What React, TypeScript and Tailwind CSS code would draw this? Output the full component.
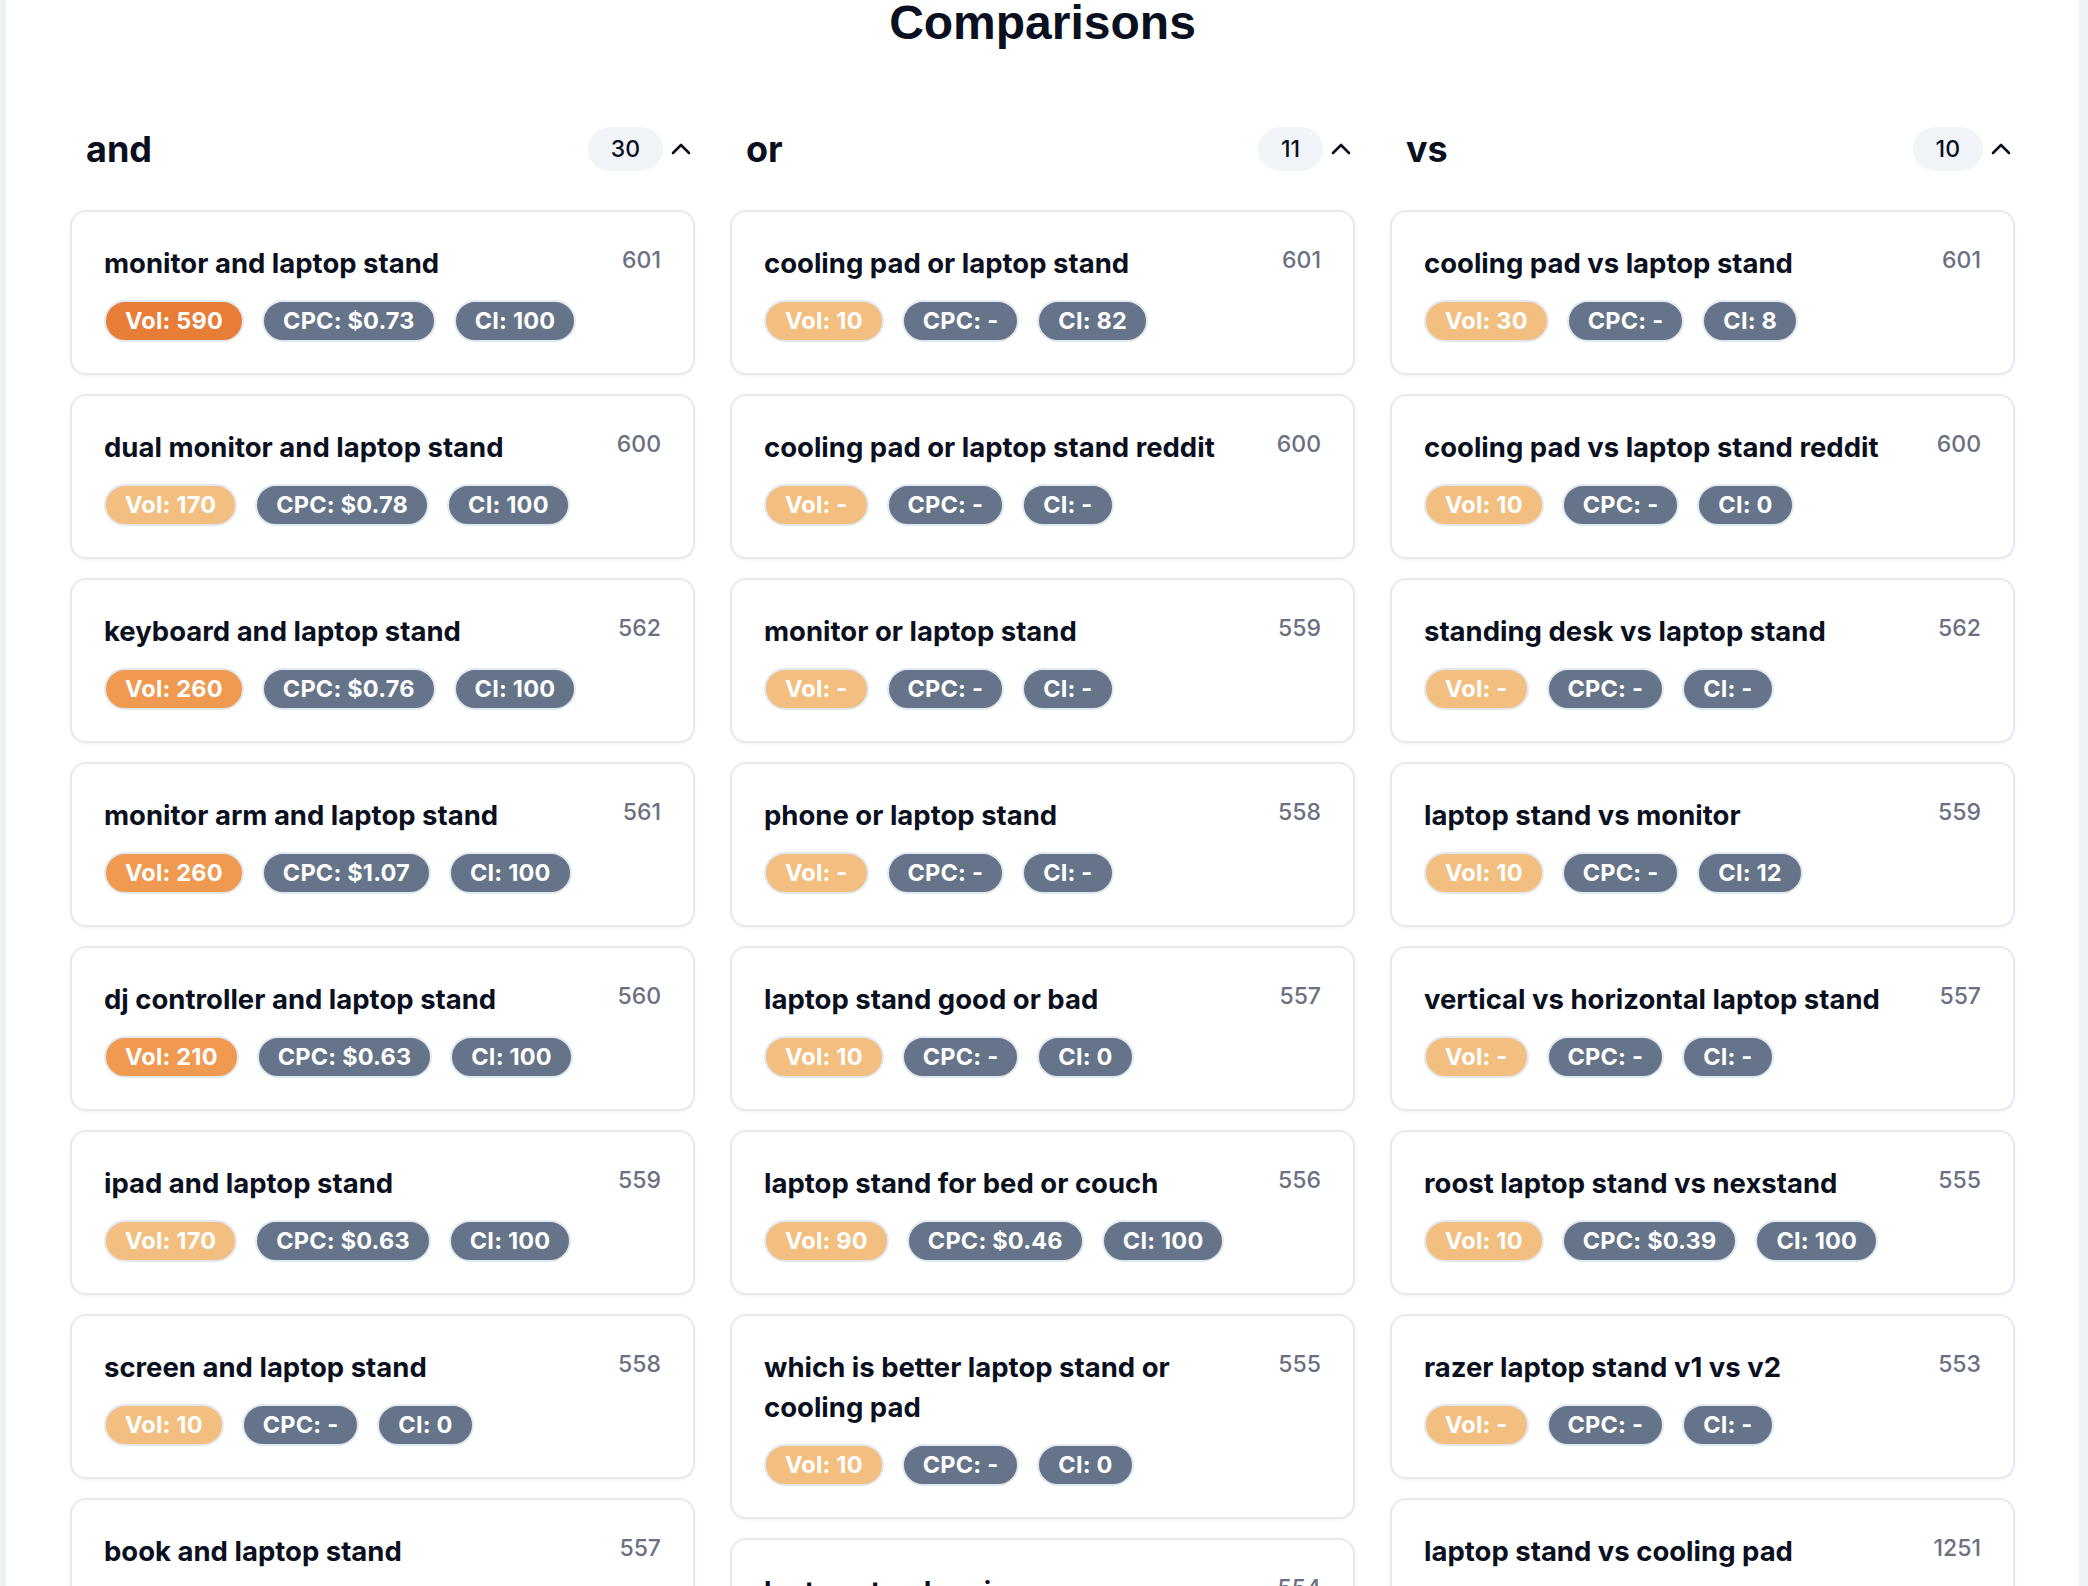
type Item = {
    title: string;
    rank: number;
    vol: string;
    cpc: string;
    ci: string;
};

type Group = {
    label: string;
    count: number;
    items: Item[];
};

const groups: Group[] = [
    {
        label: "and",
        count: 30,
        items: [
            { title: "monitor and laptop stand", rank: 601, vol: "590", cpc: "$0.73", ci: "100" },
            { title: "dual monitor and laptop stand", rank: 600, vol: "170", cpc: "$0.78", ci: "100" },
            { title: "keyboard and laptop stand", rank: 562, vol: "260", cpc: "$0.76", ci: "100" },
            { title: "monitor arm and laptop stand", rank: 561, vol: "260", cpc: "$1.07", ci: "100" },
            { title: "dj controller and laptop stand", rank: 560, vol: "210", cpc: "$0.63", ci: "100" },
            { title: "ipad and laptop stand", rank: 559, vol: "170", cpc: "$0.63", ci: "100" },
            { title: "screen and laptop stand", rank: 558, vol: "10", cpc: "-", ci: "0" },
            { title: "book and laptop stand", rank: 557, vol: "10", cpc: "-", ci: "0" }
        ]
    },
    {
        label: "or",
        count: 11,
        items: [
            { title: "cooling pad or laptop stand", rank: 601, vol: "10", cpc: "-", ci: "82" },
            { title: "cooling pad or laptop stand reddit", rank: 600, vol: "-", cpc: "-", ci: "-" },
            { title: "monitor or laptop stand", rank: 559, vol: "-", cpc: "-", ci: "-" },
            { title: "phone or laptop stand", rank: 558, vol: "-", cpc: "-", ci: "-" },
            { title: "laptop stand good or bad", rank: 557, vol: "10", cpc: "-", ci: "0" },
            { title: "laptop stand for bed or couch", rank: 556, vol: "90", cpc: "$0.46", ci: "100" },
            { title: "which is better laptop stand or cooling pad", rank: 555, vol: "10", cpc: "-", ci: "0" },
            { title: "laptop stand or riser", rank: 554, vol: "-", cpc: "-", ci: "-" }
        ]
    },
    {
        label: "vs",
        count: 10,
        items: [
            { title: "cooling pad vs laptop stand", rank: 601, vol: "30", cpc: "-", ci: "8" },
            { title: "cooling pad vs laptop stand reddit", rank: 600, vol: "10", cpc: "-", ci: "0" },
            { title: "standing desk vs laptop stand", rank: 562, vol: "-", cpc: "-", ci: "-" },
            { title: "laptop stand vs monitor", rank: 559, vol: "10", cpc: "-", ci: "12" },
            { title: "vertical vs horizontal laptop stand", rank: 557, vol: "-", cpc: "-", ci: "-" },
            { title: "roost laptop stand vs nexstand", rank: 555, vol: "10", cpc: "$0.39", ci: "100" },
            { title: "razer laptop stand v1 vs v2", rank: 553, vol: "-", cpc: "-", ci: "-" },
            { title: "laptop stand vs cooling pad", rank: 1251, vol: "-", cpc: "-", ci: "-" }
        ]
    }
];

// darker orange for higher search volume
const volColor = (vol: string) => {
    const n = parseInt(vol, 10);
    if (n >= 500) return "bg-[#e87d37]";
    if (n >= 200) return "bg-[#ef9a50]";
    return "bg-[#f3bf80]";
};

const Badge = ({ className, children }: { className: string; children: React.ReactNode }) => (
    <span
        className={`${className} border-2 border-[#e2e8f0] flex font-bold h-[42px] items-center leading-none px-[19px] rounded-full text-[23.5px] text-white tracking-[0.2px]`}
    >
        {children}
    </span>
);

const Card = ({ item }: { item: Item }) => (
    <div className="bg-white border-2 border-[#e6eaf0] pb-[31px] pt-[31px] px-[32px] rounded-[16px] shadow-[0_1px_3px_rgba(15,23,42,0.06)]">
        <div className="flex gap-4 items-start justify-between">
            <span className="font-bold leading-[40px] text-[#0b1020] text-[27.5px]">
                {item.title}
            </span>
            <span className="font-medium leading-[34px] shrink-0 text-[#6b7080] text-[23px]">
                {item.rank}
            </span>
        </div>
        <div className="flex gap-[18px] mt-[17px]">
            <Badge className={volColor(item.vol)}>Vol: {item.vol}</Badge>
            <Badge className="bg-[#667489]">CPC: {item.cpc}</Badge>
            <Badge className="bg-[#667489]">CI: {item.ci}</Badge>
        </div>
    </div>
);

const Column = ({ group }: { group: Group }) => (
    <div className="flex flex-col">
        <div className="flex h-[44px] items-center justify-between pl-[16px] pr-[2px]">
            <span className="font-bold text-[#0b1020] text-[36px]">{group.label}</span>
            <div className="flex gap-[6px] items-center">
                <span className="bg-[#f1f5f9] flex font-medium h-[44px] items-center px-[23px] rounded-full text-[#0b1020] text-[23px]">
                    {group.count}
                </span>
                <svg className="h-[24px] w-[24px]" fill="none" viewBox="0 0 24 24">
                    <path
                        d="M4 16 L12 8 L20 16"
                        stroke="#0b1020"
                        strokeLinecap="round"
                        strokeLinejoin="round"
                        strokeWidth="2.6"
                    />
                </svg>
            </div>
        </div>
        <div className="flex flex-col gap-[19px] mt-[39px]">
            {group.items.map((item) => (
                <Card item={item} key={item.title} />
            ))}
        </div>
    </div>
);

const App = () => {
    return (
        <div className="bg-[#eff3f8] flex font-['Inter',sans-serif] h-[1586px] overflow-hidden pl-[6px] pr-[9px]">
            <div className="bg-white flex-1 px-[64px]">
                <h1 className="-mt-[1px] font-['Liberation_Sans',Arial,sans-serif] font-bold h-[47px] leading-none text-[#0b1020] text-[48px] text-center">
                    Comparisons
                </h1>
                <div className="gap-[35px] grid grid-cols-3 mt-[81px]">
                    {groups.map((group) => (
                        <Column group={group} key={group.label} />
                    ))}
                </div>
            </div>
        </div>
    );
};

export default App;
